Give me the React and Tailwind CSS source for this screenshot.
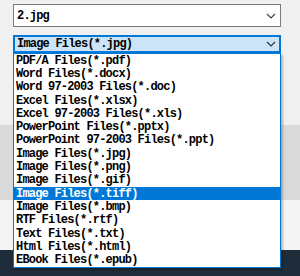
const items = [
  'PDF/A Files(*.pdf)',
  'Word Files(*.docx)',
  'Word 97-2003 Files(*.doc)',
  'Excel Files(*.xlsx)',
  'Excel 97-2003 Files(*.xls)',
  'PowerPoint Files(*.pptx)',
  'PowerPoint 97-2003 Files(*.ppt)',
  'Image Files(*.jpg)',
  'Image Files(*.png)',
  'Image Files(*.gif)',
  'Image Files(*.tiff)',
  'Image Files(*.bmp)',
  'RTF Files(*.rtf)',
  'Text Files(*.txt)',
  'Html Files(*.html)',
  'EBook Files(*.epub)',
];

const font = { fontFamily: '"Liberation Mono", "DejaVu Sans Mono", monospace' };

function Chevron({ color }) {
  return (
    <svg width="10" height="6" viewBox="0 0 10 6" className="shrink-0">
      <path d="M1 1 L5 5 L9 1" fill="none" stroke={color} strokeWidth="1.2" />
    </svg>
  );
}

export default function App() {
  return (
    <div className="relative w-[300px] h-[276px] flex flex-col overflow-hidden text-black" style={font}>
      <div className="h-[125px] bg-[#f0f0f0] px-[13px] pt-[4px] flex flex-col">
        <div className="w-[268px] h-[23px] border border-[#7a7a7a] bg-white flex items-center justify-between pl-[3px] pr-[4px]">
          <span className="text-[12px] font-bold tracking-[-0.8px] leading-none">2.jpg</span>
          <Chevron color="#444" />
        </div>
        <div className="mt-[8px] w-[268px] h-[18px] border-2 border-[#0078d7] bg-[#cce4f7] flex items-center justify-between pl-[2px] pr-[3px]">
          <span className="text-[12px] font-bold tracking-[-0.8px] leading-none">Image Files(*.jpg)</span>
          <Chevron color="#333" />
        </div>
      </div>
      <div className="h-[75px] bg-[#dadada]" />
      <div className="h-[50px] bg-[#f4f4f4]" />
      <div className="flex-1 bg-[#1f2d3a]" />

      <div className="absolute left-[13px] top-[53px] w-[268px] h-[215px] border border-[#0078d7] bg-white shadow-[2px_2px_2px_rgba(0,0,0,0.25)] flex flex-col">
        {items.map((t, i) => (
          <div
            key={t}
            className={
              'h-[13.3px] flex items-center pl-[2px] text-[12px] font-bold tracking-[-0.8px] leading-none whitespace-nowrap ' +
              (i === 10 ? 'bg-[#0078d7] text-white' : '')
            }
          >
            {t}
          </div>
        ))}
      </div>
    </div>
  );
}
